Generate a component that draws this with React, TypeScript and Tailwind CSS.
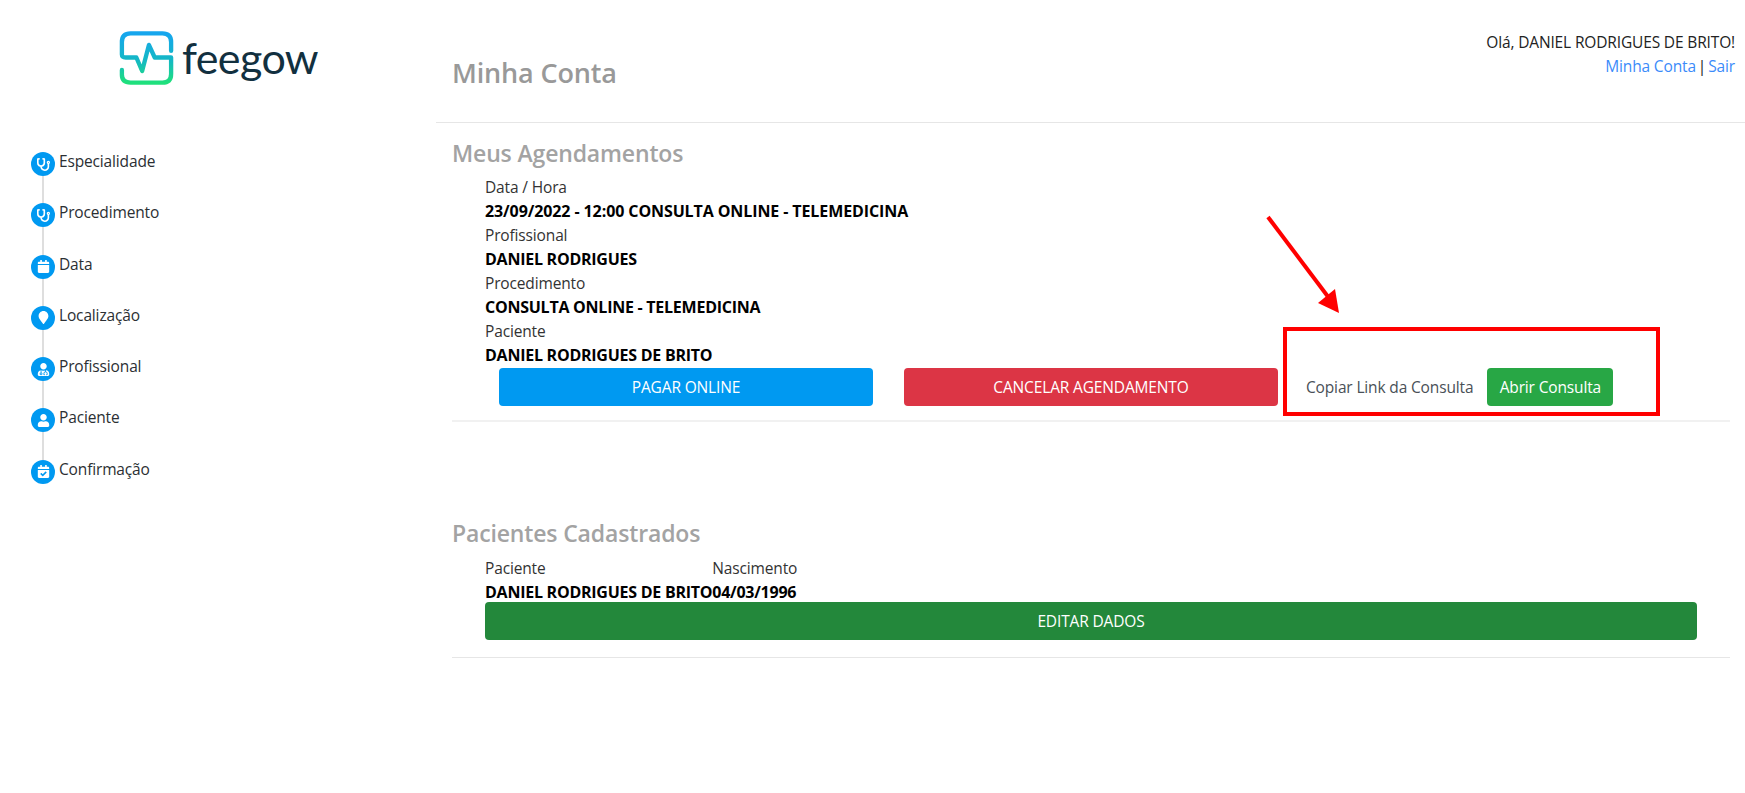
import type { ReactNode } from "react";
import {
  FaCalendar,
  FaCalendarCheck,
  FaMapMarker,
  FaStethoscope,
  FaUser,
  FaUserMd,
} from "react-icons/fa";

const steps = [
  { label: "Especialidade", icon: <FaStethoscope /> },
  { label: "Procedimento", icon: <FaStethoscope /> },
  { label: "Data", icon: <FaCalendar /> },
  { label: "Localização", icon: <FaMapMarker /> },
  { label: "Profissional", icon: <FaUserMd /> },
  { label: "Paciente", icon: <FaUser /> },
  { label: "Confirmação", icon: <FaCalendarCheck /> },
];

function Logo() {
  return (
    <div className="flex items-center gap-[8px]">
      <svg width="55" height="55" viewBox="0 0 57 56" fill="none">
        <defs>
          <linearGradient id="logoStroke" x1="0" y1="0" x2="0" y2="1">
            <stop offset="0" stopColor="#16a6ee" />
            <stop offset="0.55" stopColor="#14b8c4" />
            <stop offset="1" stopColor="#1fe07c" />
          </linearGradient>
        </defs>
        <path
          d="M3 46V41M3 25V12C3 6 6 3 12 3H45C51 3 54 6 54 12V21M3 25C3 27 4 28 7 28H18L24 42L31 15L37 28H54V45C54 51 51 54 45 54H12C6 54 3 51 3 46"
          stroke="url(#logoStroke)"
          strokeWidth="4.5"
          strokeLinecap="round"
          strokeLinejoin="round"
        />
      </svg>
      <span className="font-['Lato',sans-serif] text-[43px] leading-none tracking-[-0.6px] text-[#12303f]">
        feegow
      </span>
    </div>
  );
}

function Sidebar() {
  return (
    <aside className="w-[436px] shrink-0 pl-[31px]">
      <div className="pt-[30px] pl-[88px]">
        <Logo />
      </div>
      <ol className="mt-[67px]">
        {steps.map((step, index) => (
          <li key={step.label} className="flex h-[51.3px] gap-1">
            <div className="flex w-6 flex-col items-center">
              <span className="flex size-6 shrink-0 items-center justify-center rounded-full bg-[#0099f1] text-[13px] text-white">
                {step.icon}
              </span>
              {index < steps.length - 1 ? (
                <span className="w-[2px] flex-1 bg-[#dedede]" />
              ) : null}
            </div>
            <span className="-mt-[3px] leading-6 text-[#2b2f33]">
              {step.label}
            </span>
          </li>
        ))}
      </ol>
    </aside>
  );
}

function Field({
  label,
  value,
  valueClassName = "tracking-[-0.25px]",
}: {
  label: string;
  value: string;
  valueClassName?: string;
}) {
  return (
    <>
      <div className="text-[#333]">{label}</div>
      <div className={`text-[16px] font-bold text-black ${valueClassName}`}>
        {value}
      </div>
    </>
  );
}

function ActionButton({
  children,
  className,
}: {
  children: ReactNode;
  className: string;
}) {
  return (
    <button
      className={`flex h-[38px] items-center justify-center rounded-[4px] text-white ${className}`}
    >
      {children}
    </button>
  );
}

function SectionTitle({ children }: { children: ReactNode }) {
  return (
    <h2 className="pt-2 text-[23px] leading-[44px] font-semibold text-[#a3a3a3]">
      {children}
    </h2>
  );
}

export default function App() {
  return (
    <div className="relative flex min-h-screen bg-white font-['Open_Sans',sans-serif] text-[15.5px] leading-6 tracking-[-0.15px]">
      <Sidebar />

      <main className="min-w-0 flex-1">
        <header className="flex h-[123px] justify-between border-b border-[#e6e6e6] pr-[10px] pl-4">
          <h1 className="pt-[53px] text-[27px] leading-10 font-semibold text-[#999]">
            Minha Conta
          </h1>
          <div className="pt-[30px] text-right text-[#222]">
            <div>Olá, DANIEL RODRIGUES DE BRITO!</div>
            <div>
              <a className="text-[#3b8bfa]">Minha Conta</a>
              <span className="mx-[2px]">|</span>
              <a className="text-[#3b8bfa]">Sair</a>
            </div>
          </div>
        </header>

        <section className="mr-[15px] ml-4 border-b-2 border-[#f1f1f1] pb-[14px]">
          <SectionTitle>Meus Agendamentos</SectionTitle>
          <div className="pl-[33px]">
            <Field
              label="Data / Hora"
              value="23/09/2022 - 12:00 CONSULTA ONLINE - TELEMEDICINA"
              valueClassName="tracking-[-0.1px]"
            />
            <Field label="Profissional" value="DANIEL RODRIGUES" />
            <Field
              label="Procedimento"
              value="CONSULTA ONLINE - TELEMEDICINA"
            />
            <Field label="Paciente" value="DANIEL RODRIGUES DE BRITO" />
          </div>
          <div className="mt-px flex items-center pl-[47px]">
            <ActionButton className="w-[374px] bg-[#0099f1]">
              PAGAR ONLINE
            </ActionButton>
            <ActionButton className="ml-[31px] w-[374px] bg-[#dc3545]">
              CANCELAR AGENDAMENTO
            </ActionButton>
            <span className="ml-[28px] text-[#495057]">
              Copiar Link da Consulta
            </span>
            <ActionButton className="ml-[14px] w-[126px] bg-[#28a745]">
              Abrir Consulta
            </ActionButton>
          </div>
        </section>

        <section className="mt-[81px] mr-[15px] ml-4 border-b border-[#e6e6e6] pb-[17px]">
          <SectionTitle>Pacientes Cadastrados</SectionTitle>
          <div className="pl-[33px]">
            <div className="grid grid-cols-[auto_auto] justify-start pt-px">
              <div className="text-[#333]">Paciente</div>
              <div className="text-[#333]">Nascimento</div>
              <div className="text-[16px] font-bold tracking-[-0.25px] text-black">
                DANIEL RODRIGUES DE BRITO
              </div>
              <div className="text-[16px] font-bold tracking-[-0.25px] text-black">
                04/03/1996
              </div>
            </div>
            <ActionButton className="-mt-[2px] w-[1212px] bg-[#23883b]">
              EDITAR DADOS
            </ActionButton>
          </div>
        </section>
      </main>

      {/* marcações feitas por cima da captura */}
      <div className="absolute top-[327px] left-[1283px] h-[89px] w-[377px] border-4 border-[#ff0000]" />
      <svg
        className="absolute top-[210px] left-[1260px]"
        width="90"
        height="110"
        viewBox="1260 210 90 110"
      >
        <line
          x1="1268"
          y1="217"
          x2="1329"
          y2="298"
          stroke="#ff0000"
          strokeWidth="4"
        />
        <polygon points="1339,313 1318,303 1335,289" fill="#ff0000" />
      </svg>
    </div>
  );
}
